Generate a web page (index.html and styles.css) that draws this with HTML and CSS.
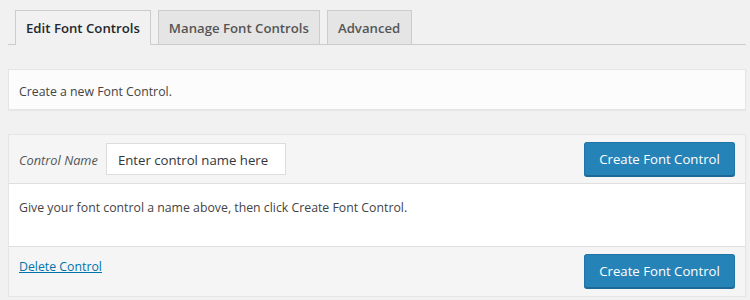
FILE: index.html
```html
<!DOCTYPE html>
<html lang="en">
<head>
    <meta charset="UTF-8">
    <title>Edit Font Controls</title>
    <link rel="stylesheet" href="styles.css">
</head>
<body>
    <div class="wrap">
        <nav class="tabs">
            <a class="tab active" href="#">Edit Font Controls</a>
            <a class="tab" href="#">Manage Font Controls</a>
            <a class="tab" href="#">Advanced</a>
        </nav>

        <div class="notice">Create a new Font Control.</div>

        <div class="panel">
            <div class="panel-head">
                <label class="name-label" for="control-name">Control Name</label>
                <input type="text" id="control-name" placeholder="Enter control name here">
                <button class="btn-primary">Create Font Control</button>
            </div>
            <div class="panel-body">
                Give your font control a name above, then click Create Font Control.
            </div>
            <div class="panel-foot">
                <a class="delete-link" href="#">Delete Control</a>
                <button class="btn-primary">Create Font Control</button>
            </div>
        </div>
    </div>
</body>
</html>
```

FILE: styles.css
```css
body {
    margin: 0;
    background-color: #f1f1f1;
    font-family: "Open Sans", "Noto Sans", sans-serif;
    font-size: 12.3px;
    color: #444;
}

.wrap {
    padding: 10px 4px 0 8px;
}

.tabs {
    display: flex;
    gap: 7px;
    padding-left: 7px;
    border-bottom: 1px solid #ccc;
    height: 34px;
}

.tab {
    display: block;
    padding: 3px 10px 0;
    line-height: 28px;
    height: 30px;
    font-size: 13.2px;
    font-weight: 600;
    color: #555;
    text-decoration: none;
    background-color: #e5e5e5;
    border: 1px solid #ccc;
    border-bottom: none;
}

.tab:last-child {
    padding-right: 11px;
}

.tab.active {
    background-color: #f1f1f1;
    color: #23282d;
    height: 31px;
    margin-bottom: -1px;
}

.notice {
    margin-top: 24px;
    background-color: #fcfcfc;
    border: 1px solid #e5e5e5;
    box-shadow: 0 1px 1px rgba(0, 0, 0, 0.04);
    padding: 13px 10px 8px;
    line-height: 18px;
}

.panel {
    margin-top: 24px;
    border: 1px solid #e5e5e5;
    box-shadow: 0 1px 1px rgba(0, 0, 0, 0.04);
    background-color: #fff;
}

.panel-head, .panel-foot {
    display: flex;
    align-items: center;
    background-color: #f5f5f5;
    padding: 0 10px;
}

.panel-head {
    height: 48px;
    border-bottom: 1px solid #dfdfdf;
}

.panel-foot {
    height: 49px;
    border-top: 1px solid #dfdfdf;
}

.name-label {
    font-size: 12.8px;
    font-style: italic;
    color: #555;
    margin-right: 8px;
    padding-top: 1px;
}

input {
    width: 180px;
    height: 32px;
    box-sizing: border-box;
    border: 1px solid #ddd;
    padding: 2px 10px 0 11px;
    font-family: inherit;
    font-size: 13.2px;
    color: #32373c;
}

input::placeholder {
    color: #32373c;
}

.btn-primary {
    margin-left: auto;
    width: 151px;
    height: 34px;
    padding-top: 2px;
    background-color: #2683b8;
    border: 1px solid #1f75a6;
    border-bottom-color: #1b6997;
    border-radius: 3px;
    box-shadow: 0 1px 0 #1b6997;
    color: #fff;
    font-family: inherit;
    font-size: 13.2px;
    cursor: pointer;
}

.panel-head .btn-primary {
    margin-top: -1px;
}

.panel-foot .btn-primary {
    margin-top: -2px;
}

.panel-body {
    height: 62px;
    padding: 15px 10px 0;
    box-sizing: border-box;
    line-height: 18px;
}

.delete-link {
    color: #0073aa;
    margin-bottom: 10px;
}
```
